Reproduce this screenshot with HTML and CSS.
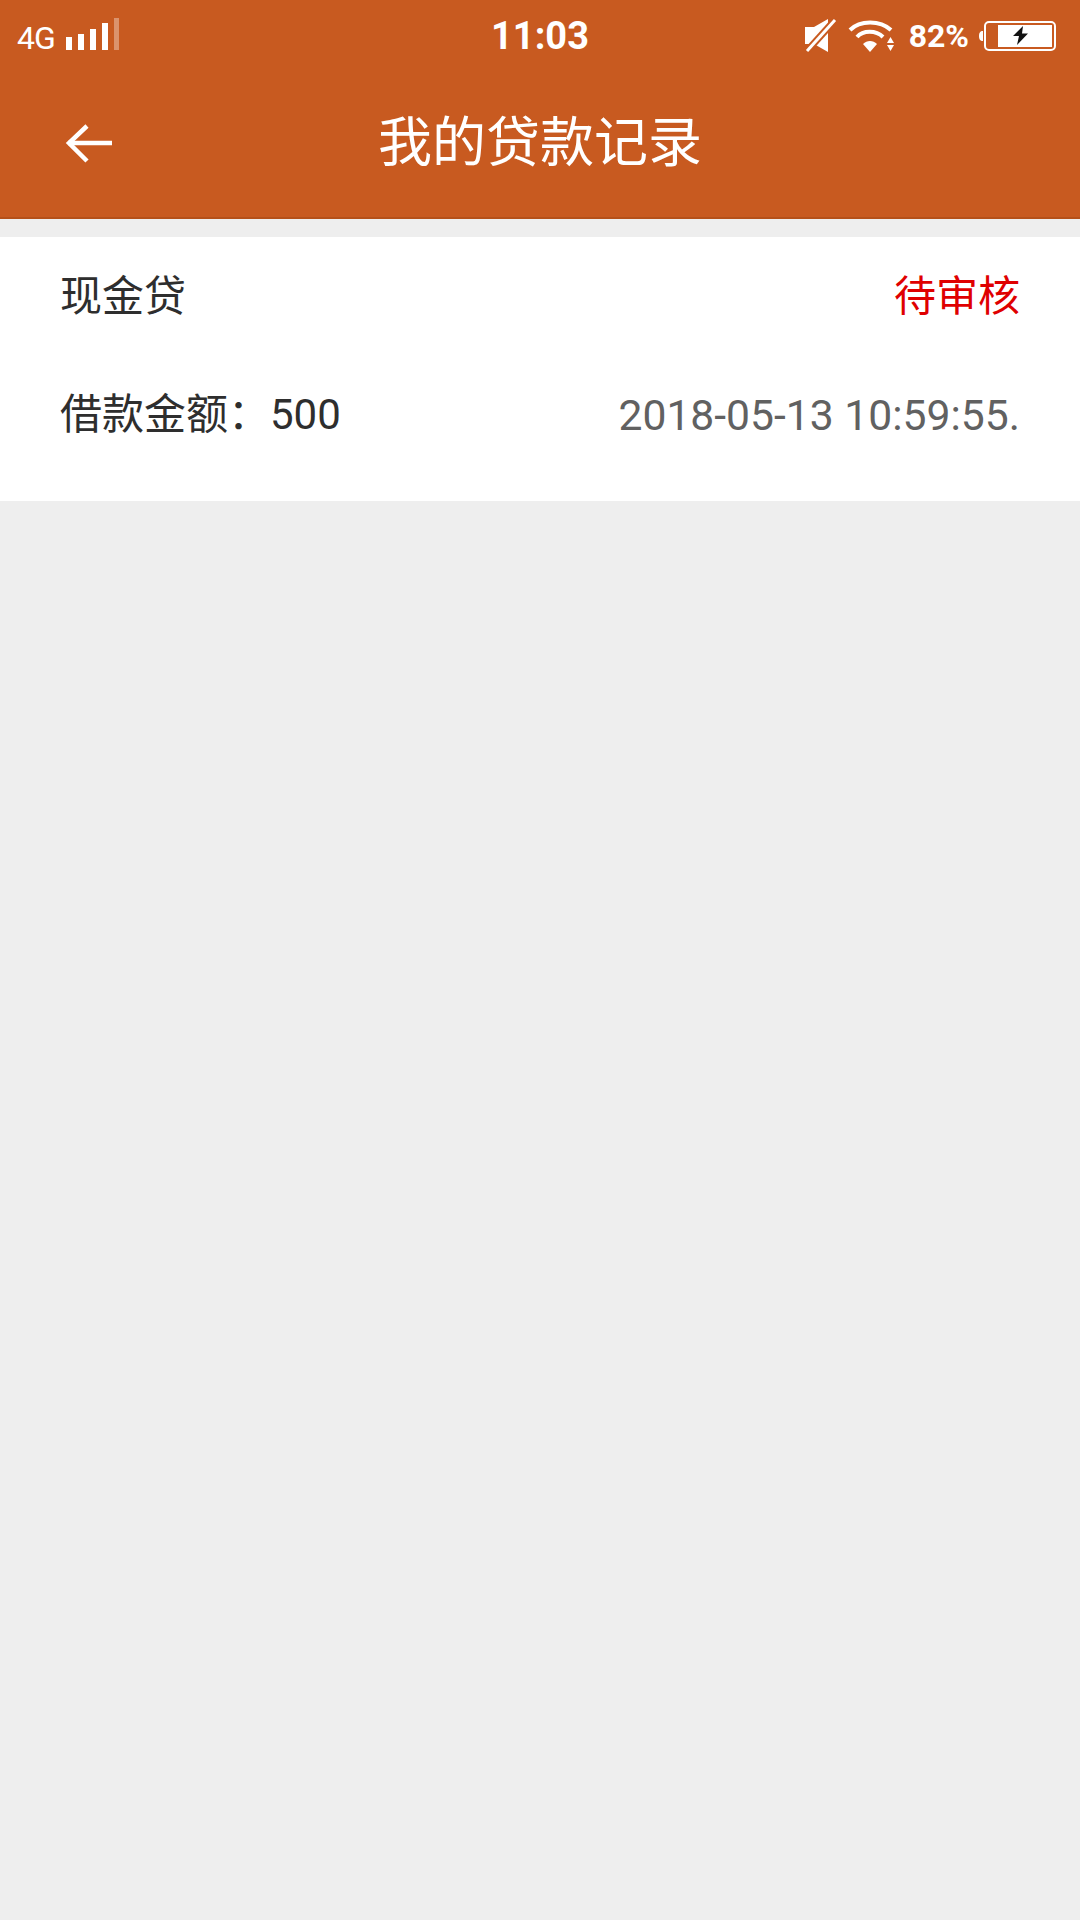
FILE: index.html
```html
<!DOCTYPE html>
<html>
<head>
	<meta charset="UTF-8">
	<title>我的贷款记录</title>
	<link rel="stylesheet" href="styles.css">
</head>
<body>
	<div class="header">
		<div class="statusbar">
			<div class="status-left">
				<span class="net">4G</span>
				<svg class="signal" width="54" height="32" viewBox="0 0 54 32">
					<rect x="0" y="19" width="6" height="13" fill="#fff"/>
					<rect x="12" y="16" width="6" height="16" fill="#fff"/>
					<rect x="24" y="11" width="6" height="21" fill="#fff"/>
					<rect x="36" y="5" width="6" height="27" fill="#fff"/>
					<rect x="48" y="0" width="5" height="32" fill="#fff" opacity="0.35"/>
				</svg>
			</div>
			<div class="time">11:03</div>
			<div class="status-right">
				<svg class="mute" width="32" height="34" viewBox="0 0 32 34">
					<path d="M0 8H9L23 0V33L9 25H0Z" fill="#fff"/>
					<path d="M2 32L30 1" stroke="#c85a20" stroke-width="7"/>
					<path d="M2 32L30 1" stroke="#fff" stroke-width="3"/>
				</svg>
				<svg class="wifi" width="46" height="34" viewBox="0 0 46 34">
					<path d="M2 11C12 1 32 1 43 11" fill="none" stroke="#fff" stroke-width="4"/>
					<path d="M9 18C15 11 28 11 35 18" fill="none" stroke="#fff" stroke-width="4"/>
					<path d="M15 25C19 21 25 21 29 25L22 33Z" fill="#fff"/>
					<path d="M42.500 18L46 24H39Z" fill="#fff"/>
					<path d="M39 26H46L42.500 32Z" fill="#fff"/>
				</svg>
				<span class="percent">82%</span>
				<svg class="battery" width="78" height="30" viewBox="0 0 78 30">
					<path d="M5 10V20C2 20 1 18 1 15S2 10 5 10Z" fill="#fff"/>
					<rect x="7" y="1" width="70" height="28" rx="4" fill="none" stroke="#fff" stroke-width="2"/>
					<rect x="20" y="4" width="54" height="22" fill="#fff"/>
					<path d="M45 5L35 15H41L39 24L50 12.500H44Z" fill="#111"/>
				</svg>
			</div>
		</div>
		<div class="toolbar">
			<svg class="back" width="48" height="40" viewBox="0 0 48 40">
				<path d="M3 19H47" stroke="#fff" stroke-width="4.500" fill="none"/>
				<path d="M22 2L4 19L22 37" stroke="#fff" stroke-width="4.500" fill="none"/>
			</svg>
			<div class="title">我的贷款记录</div>
		</div>
	</div>
	<div class="card">
		<div class="row row1">
			<span class="name">现金贷</span>
			<span class="state">待审核</span>
		</div>
		<div class="row row2">
			<span class="name">借款金额：500</span>
			<span class="date">2018-05-13 10:59:55.</span>
		</div>
	</div>
</body>
</html>
```

FILE: styles.css
```css
*{
	margin:0px;
	padding:0px;
	box-sizing:border-box;
}
body{
	width:1080px;
	height:1920px;
	background-color:#eeeeee;
	font-family:"Roboto","Noto Sans CJK SC",sans-serif;
	overflow:hidden;
}
.header{
	height:219px;
	background-color:#c85a20;
	border-bottom:2px solid #b55019;
	color:white;
}
.statusbar{
	height:72px;
	padding:0 24px;
	display:flex;
	align-items:center;
}
.status-left,.status-right{
	flex:1;
	display:flex;
	align-items:center;
}
.status-right{
	justify-content:flex-end;
}
.net{
	margin:4px 0 0 -7px;
	font-size:32px;
	letter-spacing:-1px;
}
.signal{
	margin:0 0 4px 11px;
}
.time{
	font-size:38px;
	font-weight:700;
}
.wifi{
	margin-left:11px;
}
.percent{
	margin-left:15px;
	font-size:32px;
	font-weight:700;
}
.battery{
	margin-left:9px;
}
.toolbar{
	height:145px;
	padding-bottom:12px;
	position:relative;
	display:flex;
	align-items:center;
	justify-content:center;
}
.back{
	position:absolute;
	left:65px;
	top:52px;
}
.title{
	font-size:54px;
}
.card{
	margin-top:18px;
	height:264px;
	background-color:white;
	padding:0 60px;
	font-size:42px;
	color:#2e2e2e;
}
.row{
	display:flex;
	justify-content:space-between;
	align-items:center;
}
.row1{
	height:118px;
}
.row2{
	height:120px;
}
.row1 .name,.state{
	margin-bottom:8px;
}
.row2 .name{
	margin-bottom:10px;
}
.state{
	color:#df0000;
}
.date{
	font-size:42.650px;
	color:#616161;
}
```
